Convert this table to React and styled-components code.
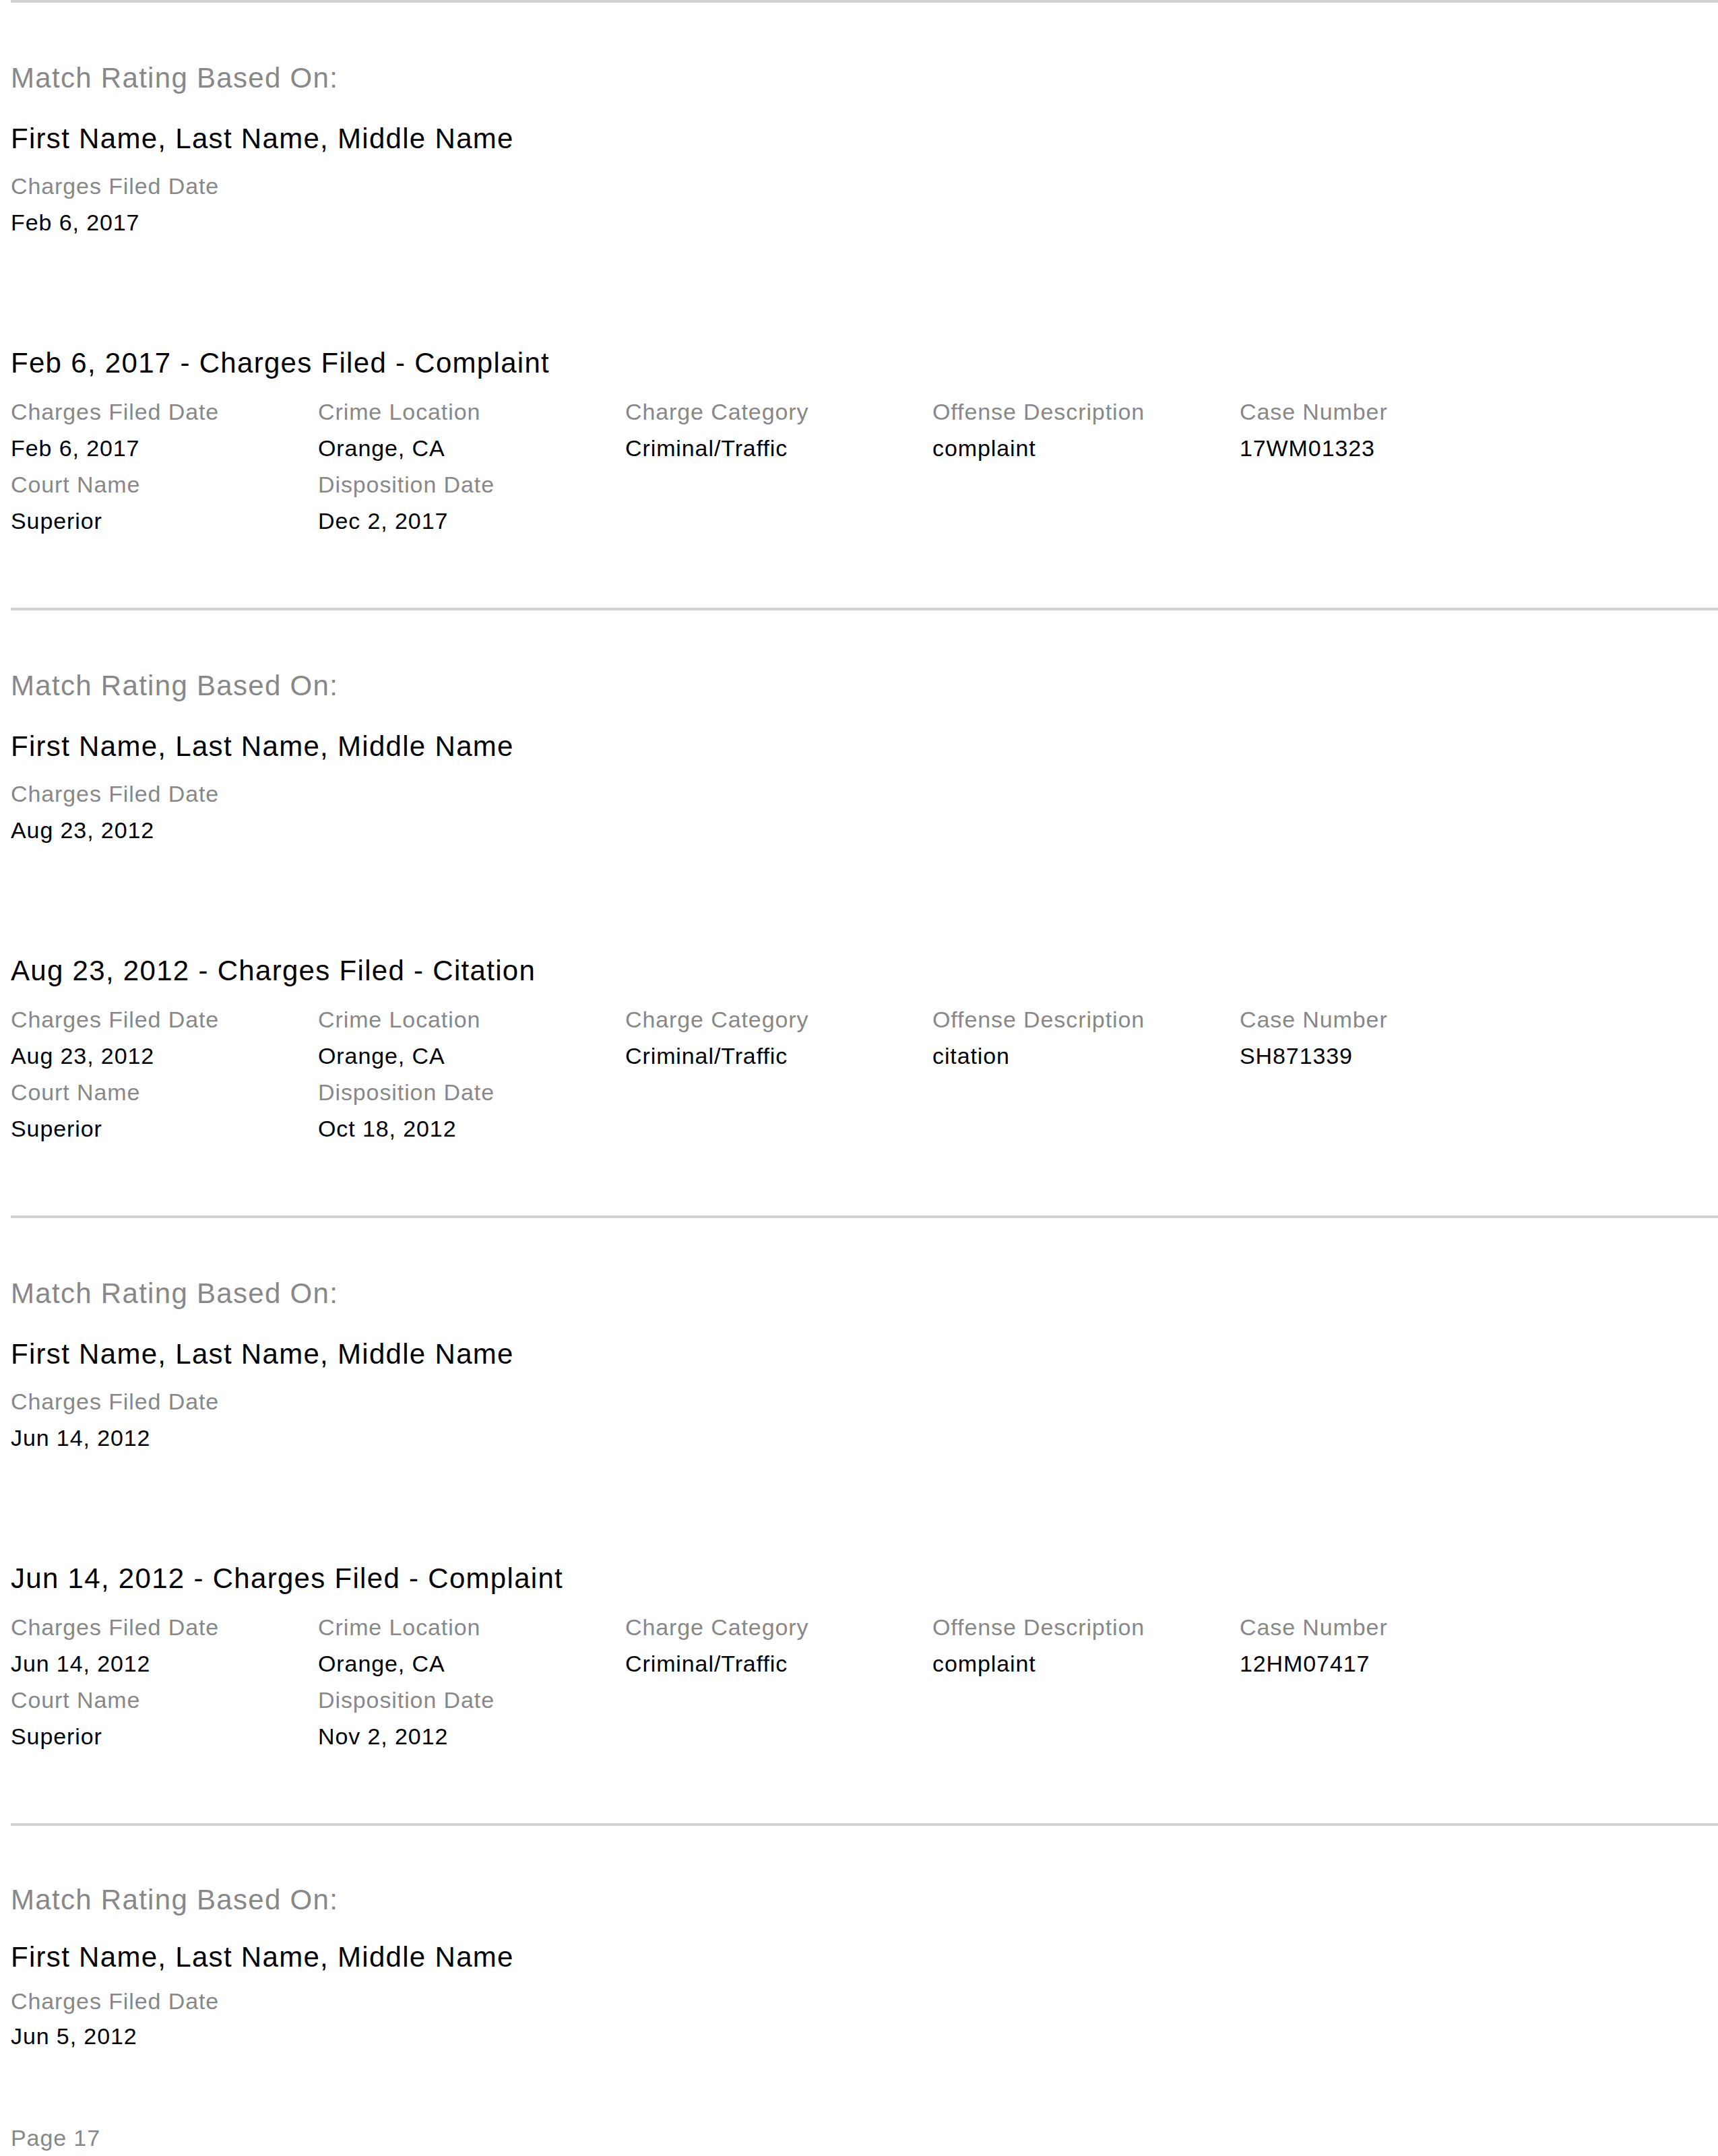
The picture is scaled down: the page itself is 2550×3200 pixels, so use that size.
import React from "react";
import styled, { createGlobalStyle } from "styled-components";

const records = [
  {
    date: "Feb 6, 2017",
    type: "Complaint",
    location: "Orange, CA",
    category: "Criminal/Traffic",
    offense: "complaint",
    caseNumber: "17WM01323",
    court: "Superior",
    disposition: "Dec 2, 2017",
  },
  {
    date: "Aug 23, 2012",
    type: "Citation",
    location: "Orange, CA",
    category: "Criminal/Traffic",
    offense: "citation",
    caseNumber: "SH871339",
    court: "Superior",
    disposition: "Oct 18, 2012",
  },
  {
    date: "Jun 14, 2012",
    type: "Complaint",
    location: "Orange, CA",
    category: "Criminal/Traffic",
    offense: "complaint",
    caseNumber: "12HM07417",
    court: "Superior",
    disposition: "Nov 2, 2012",
  },
  {
    date: "Jun 5, 2012",
  },
];

const GlobalStyle = createGlobalStyle`
  html, body {
    margin: 0;
    padding: 0;
    background: #fff;
  }
  body {
    font-family: "Liberation Sans", Arial, Helvetica, sans-serif;
    color: #000;
  }
`;

const Page = styled.div`
  width: 2550px;
  height: 3200px;
  padding-left: 16px;
  box-sizing: border-box;
  display: flex;
  flex-direction: column;
  overflow: hidden;
`;

// each record starts with a grey rule across the page
// the last one on the page sits a little tighter
const Record = styled.section`
  border-top: 4px solid #d2d2d2;
  padding: ${(p) => (p.$compact ? "85px 0 0" : "87px 0 102px")};
  display: flex;
  flex-direction: column;
`;

const MatchTitle = styled.div`
  font-size: 42px;
  line-height: 50px;
  letter-spacing: 1.3px;
  color: #888;
`;

const MatchedOn = styled.div`
  font-size: 42px;
  line-height: 50px;
  letter-spacing: 1.3px;
  color: #000;
  margin-top: ${(p) => (p.$compact ? 35 : 40)}px;
`;

const Heading = styled.h2`
  margin: 157px 0 0;
  font-weight: normal;
  font-size: 42px;
  line-height: 50px;
  letter-spacing: 1.3px;
  color: #000;
`;

const Fields = styled.div`
  display: grid;
  grid-template-columns: repeat(5, 456px);
  margin-top: ${(p) => p.$top || 0}px;
`;

const Field = styled.div`
  display: flex;
  flex-direction: column;
`;

const Label = styled.div`
  font-size: 34px;
  line-height: ${(p) => (p.$compact ? 52 : 54)}px;
  letter-spacing: 0.9px;
  color: #888;
  white-space: nowrap;
`;

const Value = styled.div`
  font-size: 34px;
  line-height: ${(p) => (p.$compact ? 52 : 54)}px;
  letter-spacing: 0.9px;
  color: #000;
  white-space: nowrap;
`;

const Footer = styled.div`
  margin-top: auto;
  font-size: 34px;
  line-height: 54px;
  letter-spacing: 0.9px;
  color: #888;
`;

const Item = ({ label, value, compact }) => (
  <Field>
    <Label $compact={compact}>{label}</Label>
    <Value $compact={compact}>{value}</Value>
  </Field>
);

const RecordBlock = ({ r, compact }) => (
  <Record $compact={compact}>
    <MatchTitle>Match Rating Based On:</MatchTitle>
    <MatchedOn $compact={compact}>First Name, Last Name, Middle Name</MatchedOn>
    <Fields $top={compact ? 14 : 18}>
      <Item label="Charges Filed Date" value={r.date} compact={compact} />
    </Fields>
    {r.type && (
      <>
        <Heading>
          {r.date} - Charges Filed - {r.type}
        </Heading>
        <Fields $top={20}>
          <Item label="Charges Filed Date" value={r.date} />
          <Item label="Crime Location" value={r.location} />
          <Item label="Charge Category" value={r.category} />
          <Item label="Offense Description" value={r.offense} />
          <Item label="Case Number" value={r.caseNumber} />
          <Item label="Court Name" value={r.court} />
          <Item label="Disposition Date" value={r.disposition} />
        </Fields>
      </>
    )}
  </Record>
);

const App = () => (
  <>
    <GlobalStyle />
    <Page>
      {records.map((r, i) => (
        <RecordBlock key={r.date} r={r} compact={i === records.length - 1} />
      ))}
      <Footer>Page 17</Footer>
    </Page>
  </>
);

export default App;
